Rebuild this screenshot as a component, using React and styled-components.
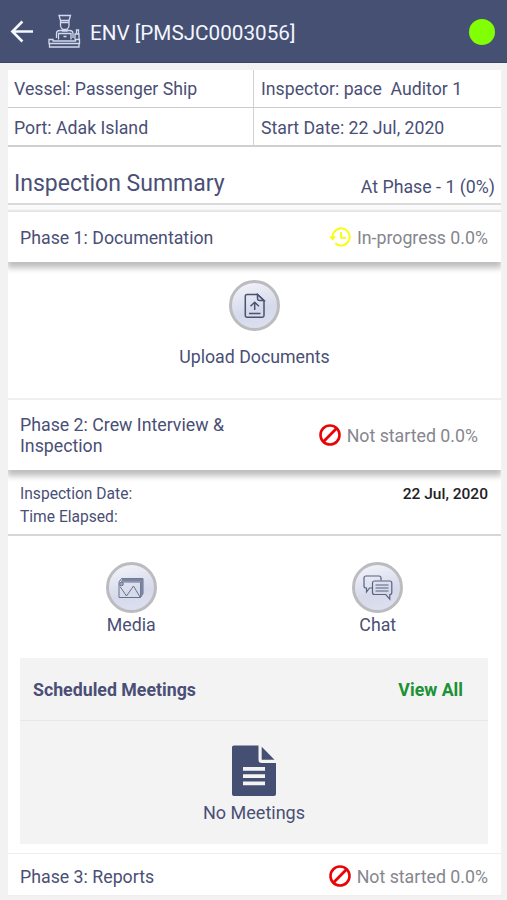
import React from 'react';
import styled, { createGlobalStyle } from 'styled-components';

const App = () => {
  return (
    <>
      <GlobalStyle />
      <Screen>
        <Header>
          <BackIcon />
          <OfficerIcon />
          <Title>ENV [PMSJC0003056]</Title>
          <OnlineDot />
        </Header>

        <Content>
          <InfoTable>
            <InfoCell>Vessel: Passenger Ship</InfoCell>
            <InfoCell $right>{'Inspector: pace  Auditor 1'}</InfoCell>
            <InfoCell $last>Port: Adak Island</InfoCell>
            <InfoCell $right $last>
              Start Date: 22 Jul, 2020
            </InfoCell>
          </InfoTable>

          <Summary>
            <SummaryTitle>Inspection Summary</SummaryTitle>
            <SummaryPhase>At Phase - 1 (0%)</SummaryPhase>
          </Summary>
          <Gap />

          <PhaseBar $height="50px" $shadow>
            <PhaseName>Phase 1: Documentation</PhaseName>
            <Status>
              <HistoryIcon />
              <StatusText>In-progress 0.0%</StatusText>
            </Status>
          </PhaseBar>
          <UploadPanel>
            <Action>
              <Round>
                <UploadIcon />
              </Round>
              <UploadLabel>Upload Documents</UploadLabel>
            </Action>
          </UploadPanel>

          <PhaseBar $height="70px" $shadow $inset>
            <PhaseName>
              Phase 2: Crew Interview &amp;
              <br />
              Inspection
            </PhaseName>
            <Status>
              <BlockIcon />
              <StatusText>Not started 0.0%</StatusText>
            </Status>
          </PhaseBar>
          <Times>
            <TimeRow>
              <span>Inspection Date:</span>
              <DateValue>22 Jul, 2020</DateValue>
            </TimeRow>
            <TimeRow>
              <span>Time Elapsed:</span>
            </TimeRow>
          </Times>
          <InterviewPanel>
            <ActionRow>
              <Action>
                <Round>
                  <MediaIcon />
                </Round>
                <ActionLabel>Media</ActionLabel>
              </Action>
              <Action>
                <Round>
                  <ChatIcon />
                </Round>
                <ActionLabel>Chat</ActionLabel>
              </Action>
            </ActionRow>
            <Meetings>
              <MeetingsHead>
                <span>Scheduled Meetings</span>
                <ViewAll>View All</ViewAll>
              </MeetingsHead>
              <MeetingsBody>
                <FileIcon />
                <NoMeetings>No Meetings</NoMeetings>
              </MeetingsBody>
            </Meetings>
          </InterviewPanel>

          <LastPhaseBar $height="41px">
            <PhaseName>Phase 3: Reports</PhaseName>
            <Status>
              <BlockIcon />
              <StatusText>Not started 0.0%</StatusText>
            </Status>
          </LastPhaseBar>
        </Content>
      </Screen>
    </>
  );
};

const BackIcon = () => (
  <svg width="24" height="24" viewBox="0 0 24 24" fill="none" stroke="#f4f7ff" strokeWidth="2.6">
    <path d="M23 12.500H2.600M12.400 2.500L2.400 12.500l10 10" />
  </svg>
);

const OfficerIcon = () => (
  <svg width="34" height="34" viewBox="0 0 34 34" fill="none" stroke="#d3d9ee" strokeWidth="1.3">
    <path d="M11 1.500h11.500l-1.500 5h-8.500zM12.500 6.500v5c0 2.200 1.800 4 4.200 4s4.300-1.800 4.300-4v-5M12.500 8.500H21" />
    <path d="M14.500 15v2h4.500v-2M8.500 24v-4.500c0-1.700 1.500-3 3.500-3h9.500c2 0 3.500 1.300 3.500 3V24" />
    <path d="M10.500 25.500v-6h12.500v6M15.500 22.500h3" />
    <path d="M1 25.500h4V27h22.500v-1.500H31.500v4H1zM1.500 29.500V33H31v-3.500" />
    <path d="M27 25.500V20h4v5.500M28.500 20v-4h2v4" />
  </svg>
);

const HistoryIcon = () => (
  <svg width="22" height="20" viewBox="0 0 22 20" fill="none" stroke="#fbfb0c" strokeWidth="1.9">
    <path d="M3.500 10A8.600 8.600 0 1 1 6.200 16.200" />
    <path d="M12 5v5.800h5" strokeWidth="1.8" />
    <path d="M0 9.500h7.200L3.600 13.500z" fill="#fbfb0c" stroke="none" />
  </svg>
);

const BlockIcon = () => (
  <svg width="22" height="22" viewBox="0 0 22 22" fill="none" stroke="#e80505" strokeWidth="2.6">
    <circle cx="11" cy="11" r="9.500" />
    <path d="M4.600 17.400L17.400 4.600" strokeWidth="2.8" />
  </svg>
);

const UploadIcon = () => (
  <svg width="22" height="26" viewBox="0 0 22 26" fill="none" stroke="#4a5272" strokeWidth="1.5">
    <path d="M3 1.500h10.500l6.500 6v15c0 1-.7 1.700-1.700 1.700H3c-1 0-1.700-.7-1.700-1.700V3.200c0-1 .7-1.700 1.700-1.700z" />
    <path d="M13.500 1.500v3.700c0 1.300 1 2.300 2.300 2.300H20zM10.700 17V9.500M6.500 13.300l4.200-4 4.200 4M5 20.500h11.500" />
  </svg>
);

const MediaIcon = () => (
  <svg width="26" height="22" viewBox="0 0 26 22" fill="none" stroke="#68708c" strokeWidth="1">
    <path d="M1 5v15.500h21.500M1 5l2.500-3.500H25v15l-2.500 4V5H3" />
    <path d="M2 9.500l6.500 9.500 3.500-5 3.500-5 6.500 11" />
    <path d="M22.500 4.500L25 1.500v15l-2.500 4zM3 4.500l1.500-3H25l-2.500 3z" fill="#7b84a1" stroke="none" />
    <circle cx="3.500" cy="7" r="1.8" fill="#a6aec5" />
  </svg>
);

const ChatIcon = () => (
  <svg width="30" height="26" viewBox="0 0 30 26" fill="none" stroke="#59627f" strokeWidth="1.2">
    <path d="M9 13H6.500L3.500 17v-4H3c-1.200 0-2-.7-2-1.700V3C1 1.800 1.800 1 3 1h13c1.200 0 2 .8 2 2v2.500" />
    <path d="M11.500 6h15.300c1.200 0 2 .8 2 2v9.500c0 1.200-.8 2-2 2v4.700l-4-4.700H11.500c-1.200 0-2-.8-2-2V8c0-1.200.8-2 2-2z" />
    <path d="M12.500 10h13M12.500 13h13M12.500 16h13" />
  </svg>
);

const FileIcon = () => (
  <svg width="44" height="52" viewBox="0 0 44 52">
    <path
      d="M2 .5h24.500v14.200c0 2.200 1 3.300 3.200 3.300H44v31c0 1.200-.8 2-2 2H2c-1.200 0-2-.8-2-2v-46.500C0 1.300.8.500 2 .5z"
      fill="#454e73"
    />
    <path d="M29.700 1.800L42.500 14.800H29.700z" fill="#454e73" />
    <path d="M11 22h22v3.700H11zM11 29.300h22V33H11zM11 36.600h22v3.700H11z" fill="#f3f3f3" />
  </svg>
);

const GlobalStyle = createGlobalStyle`
  body {
    margin: 0;
    background: #f2f2f3;
    font-family: Roboto, 'Liberation Sans', sans-serif;
    color: #4a4f76;
  }
  * {
    box-sizing: border-box;
  }
  svg {
    display: block;
    flex-shrink: 0;
  }
`;

const Screen = styled.div`
  width: 507px;
  height: 900px;
  overflow: hidden;
  background: #f2f2f3;
`;

const Header = styled.div`
  display: flex;
  align-items: center;
  gap: 14px;
  height: 63px;
  padding: 0 12px 0 10px;
  background: #465073;
  border-bottom: 1px solid #3b4467;
`;

const Title = styled.div`
  flex: 1;
  margin-left: -6px;
  padding-top: 3px;
  color: #f3f6ff;
  font-size: 20.7px;
`;

const OnlineDot = styled.div`
  width: 26px;
  height: 26px;
  margin-top: 2px;
  border-radius: 50%;
  background: #80ff05;
`;

const Content = styled.div`
  margin: 7px 6px 0 8px;
`;

const InfoTable = styled.div`
  display: grid;
  grid-template-columns: 246px 1fr;
  grid-template-rows: 38px 39px;
  background: #fff;
`;

const InfoCell = styled.div`
  display: flex;
  align-items: center;
  padding-top: ${(props) => (props.$last ? '3px' : '1px')};
  padding-left: ${(props) => (props.$right ? '7px' : '6px')};
  font-size: 17.7px;
  white-space: pre;
  border-right: ${(props) => (props.$right ? 'none' : '1px solid #d2d2d2')};
  border-bottom: ${(props) => (props.$last ? '2px solid #d0d0d0' : '1px solid #cccccc')};
`;

const Summary = styled.div`
  display: flex;
  justify-content: space-between;
  height: 58px;
  padding: 0 6px;
  background: #fff;
  border-bottom: 2px solid #dadada;
`;

const SummaryTitle = styled.div`
  font-size: 23px;
  line-height: 28px;
  margin-top: 23px;
`;

const SummaryPhase = styled.div`
  font-size: 17.75px;
  line-height: 22px;
  margin-top: 29px;
`;

const Gap = styled.div`
  height: 7px;
  background: linear-gradient(#fafafa 0 50%, #e2e2e2);
`;

const PhaseBar = styled.div`
  position: relative;
  display: flex;
  align-items: center;
  justify-content: space-between;
  height: ${(props) => props.$height};
  padding: 0 ${(props) => (props.$inset ? '23px' : '13px')} 0 12px;
  background: #fff;
  box-shadow: ${(props) => (props.$shadow ? '0 5px 6px 1px rgba(0, 0, 0, 0.26)' : '0 0 2px rgba(0, 0, 0, 0.06)')};
  clip-path: inset(-2px 0 -12px 0);
`;

const LastPhaseBar = styled(PhaseBar)`
  padding-top: 3px;
`;

const PhaseName = styled.div`
  padding-top: 2px;
  font-size: 17.75px;
  line-height: 21px;
`;

const Status = styled.div`
  display: flex;
  align-items: center;
  gap: 6px;
  color: #85868e;
  font-size: 17.75px;
`;

const StatusText = styled.span`
  padding-top: 2px;
  line-height: 21px;
`;

const Panel = styled.div`
  background: #fff;
`;

const UploadPanel = styled(Panel)`
  height: 136px;
  padding-top: 18px;
  margin-bottom: 2px;
`;

const Action = styled.div`
  display: flex;
  flex-direction: column;
  align-items: center;
`;

const Round = styled.div`
  display: flex;
  align-items: center;
  justify-content: center;
  width: 51px;
  height: 51px;
  border: 3px solid #bcbcbf;
  border-radius: 50%;
  background: linear-gradient(165deg, #eff0f8 10%, #d5d9ea 60%, #dde1f0);
`;

const ActionLabel = styled.div`
  margin-top: 2px;
  font-size: 17.75px;
  line-height: 21px;
`;

const UploadLabel = styled(ActionLabel)`
  margin-top: 16px;
`;

const Times = styled(Panel)`
  height: 66px;
  padding: 13px 13px 0 12px;
  border-bottom: 2px solid #d6d6d6;
`;

const TimeRow = styled.div`
  display: flex;
  justify-content: space-between;
  font-size: 15.6px;
  line-height: 23px;
`;

const DateValue = styled.span`
  color: #222;
  font-size: 15.5px;
  font-weight: 500;
`;

const InterviewPanel = styled(Panel)`
  height: 317px;
  padding: 26px 13px 0 12px;
  margin-bottom: 1px;
`;

const ActionRow = styled.div`
  display: grid;
  grid-template-columns: 1fr 1fr;
  height: 96px;
  margin: 0 -13px 0 -12px;
`;

const Meetings = styled.div`
  height: 186px;
  background: #f3f3f3;
`;

const MeetingsHead = styled.div`
  display: flex;
  align-items: center;
  justify-content: space-between;
  height: 63px;
  padding: 2px 25px 0 13px;
  border-bottom: 1px solid #e8e8e8;
  font-size: 17.75px;
  font-weight: 700;
`;

const ViewAll = styled.span`
  color: #1c9135;
`;

const MeetingsBody = styled.div`
  display: flex;
  flex-direction: column;
  align-items: center;
  padding-top: 24px;
`;

const NoMeetings = styled.div`
  margin-top: 5px;
  font-size: 18px;
  line-height: 21px;
`;

export default App;
